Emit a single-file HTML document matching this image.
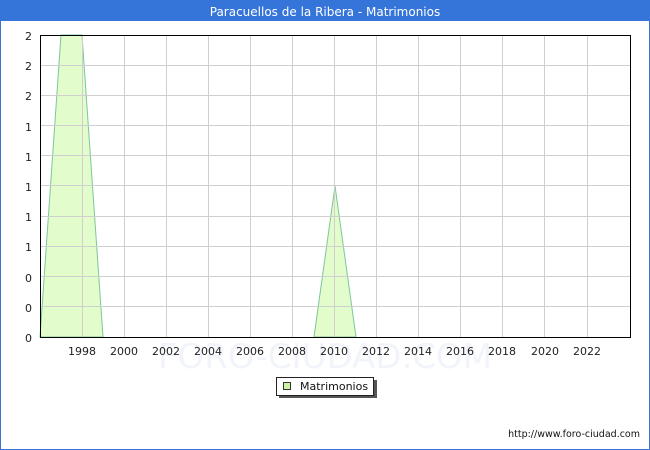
<!DOCTYPE html>
<html><head><meta charset="utf-8"><style>
html,body{margin:0;padding:0;width:650px;height:450px;overflow:hidden;background:#fff}
</style></head><body>
<svg width="650" height="450" xmlns="http://www.w3.org/2000/svg" font-family="DejaVu Sans, Liberation Sans, sans-serif">
<rect x="0.5" y="0.5" width="649" height="449" fill="#fff" stroke="#3a73d6"/>
<rect x="0" y="0" width="650" height="21" fill="#3574d8"/>
<text x="325" y="16" fill="#fff" font-size="12" text-anchor="middle">Paracuellos de la Ribera - Matrimonios</text>
<text x="325" y="368" fill="#f2f4fb" font-size="34" text-anchor="middle">FORO-CIUDAD.COM</text>
<polygon points="40,337 61,35 82,35 103,337" fill="#e2fccc" stroke="#7cc79a" stroke-width="1"/>
<polygon points="314,337 335,186 356,337" fill="#e2fccc" stroke="#7cc79a" stroke-width="1"/>
<g stroke="#cfcfcf" stroke-width="1">
<line x1="40" y1="65.5" x2="630" y2="65.5"/><line x1="40" y1="95.5" x2="630" y2="95.5"/>
<line x1="40" y1="125.5" x2="630" y2="125.5"/><line x1="40" y1="155.5" x2="630" y2="155.5"/>
<line x1="40" y1="185.5" x2="630" y2="185.5"/><line x1="40" y1="216.5" x2="630" y2="216.5"/>
<line x1="40" y1="246.5" x2="630" y2="246.5"/><line x1="40" y1="276.5" x2="630" y2="276.5"/>
<line x1="40" y1="306.5" x2="630" y2="306.5"/>
<line x1="82.5" y1="35" x2="82.5" y2="337"/><line x1="124.5" y1="35" x2="124.5" y2="337"/>
<line x1="166.5" y1="35" x2="166.5" y2="337"/><line x1="208.5" y1="35" x2="208.5" y2="337"/>
<line x1="250.5" y1="35" x2="250.5" y2="337"/><line x1="292.5" y1="35" x2="292.5" y2="337"/>
<line x1="334.5" y1="35" x2="334.5" y2="337"/><line x1="376.5" y1="35" x2="376.5" y2="337"/>
<line x1="418.5" y1="35" x2="418.5" y2="337"/><line x1="460.5" y1="35" x2="460.5" y2="337"/>
<line x1="502.5" y1="35" x2="502.5" y2="337"/><line x1="544.5" y1="35" x2="544.5" y2="337"/>
<line x1="587.5" y1="35" x2="587.5" y2="337"/>
</g>
<rect x="40.5" y="35.5" width="590" height="302" fill="none" stroke="#000"/>
<g font-size="11" fill="#222" text-anchor="end">
<text x="32" y="40">2</text><text x="32" y="70">2</text><text x="32" y="100">2</text>
<text x="32" y="131">1</text><text x="32" y="161">1</text><text x="32" y="191">1</text>
<text x="32" y="221">1</text><text x="32" y="251">1</text><text x="32" y="282">0</text>
<text x="32" y="312">0</text><text x="32" y="342">0</text>
</g>
<g font-size="11" fill="#222" text-anchor="middle">
<text x="82" y="355">1998</text><text x="124" y="355">2000</text><text x="166" y="355">2002</text>
<text x="208" y="355">2004</text><text x="250" y="355">2006</text><text x="292" y="355">2008</text>
<text x="334" y="355">2010</text><text x="376" y="355">2012</text><text x="418" y="355">2014</text>
<text x="460" y="355">2016</text><text x="502" y="355">2018</text><text x="545" y="355">2020</text>
<text x="587" y="355">2022</text>
</g>
<rect x="279" y="380" width="98" height="18" fill="#555"/>
<rect x="276.5" y="377.5" width="97" height="18" fill="#fff" stroke="#222"/>
<rect x="283.5" y="382.5" width="7" height="7" fill="#c9f5a3" stroke="#333"/>
<text x="300" y="390" font-size="11" fill="#111">Matrimonios</text>
<text x="640" y="437" font-size="9.5" fill="#111" text-anchor="end">http://www.foro-ciudad.com</text>
</svg>
</body></html>
